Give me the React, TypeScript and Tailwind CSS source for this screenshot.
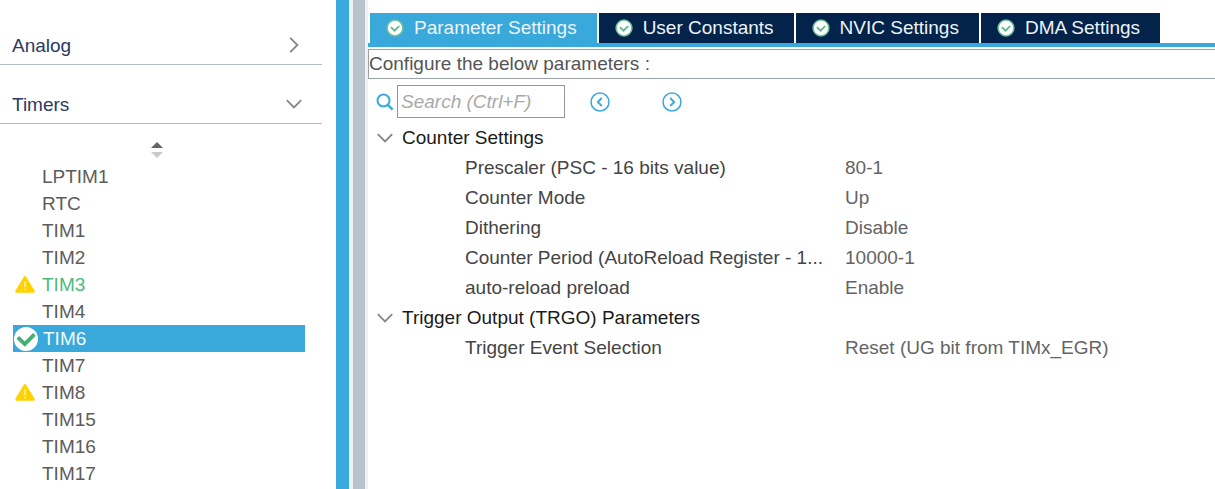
import { useState } from "react";
import clsx from "clsx";

type Status = "warning" | "ok";

interface Peripheral {
  name: string;
  status?: Status;
  configured?: boolean;
}

const PERIPHERALS: Peripheral[] = [
  { name: "LPTIM1" },
  { name: "RTC" },
  { name: "TIM1" },
  { name: "TIM2" },
  { name: "TIM3", status: "warning", configured: true },
  { name: "TIM4" },
  { name: "TIM6", status: "ok" },
  { name: "TIM7" },
  { name: "TIM8", status: "warning" },
  { name: "TIM15" },
  { name: "TIM16" },
  { name: "TIM17" },
];

const TABS = ["Parameter Settings", "User Constants", "NVIC Settings", "DMA Settings"];

const GROUPS = [
  {
    title: "Counter Settings",
    rows: [
      ["Prescaler (PSC - 16 bits value)", "80-1"],
      ["Counter Mode", "Up"],
      ["Dithering", "Disable"],
      ["Counter Period (AutoReload Register - 1...", "10000-1"],
      ["auto-reload preload", "Enable"],
    ],
  },
  {
    title: "Trigger Output (TRGO) Parameters",
    rows: [["Trigger Event Selection", "Reset (UG bit from TIMx_EGR)"]],
  },
];

function Chevron({ open }: { open: boolean }) {
  return (
    <svg className={clsx("w-4 h-4 shrink-0", !open && "-rotate-90")} viewBox="0 0 16 16" fill="none" stroke="#868686" strokeWidth="1.8" aria-hidden>
      <path d="M0.8 4.2 8 11.4l7.2-7.2" />
    </svg>
  );
}

function TabCheck() {
  return (
    <svg className="w-[18px] h-[18px] shrink-0" viewBox="0 0 18 18" fill="none" aria-hidden>
      <circle cx="9" cy="9" r="7.9" fill="#fff" stroke="#6cc296" strokeWidth="1.5" />
      <path d="m4.9 8.2 3.6 3.5 4.7-4.7" stroke="#56b988" strokeWidth="1.7" />
    </svg>
  );
}

function StatusIcon({ status }: { status?: Status }) {
  if (status === "warning") {
    return (
      <svg className="w-5 h-[17px]" viewBox="0 0 20 17" aria-hidden>
        <path d="M10 1.7 18.2 15.3H1.8Z" fill="#ffd200" stroke="#ffd200" strokeWidth="3" strokeLinejoin="round" />
        <path d="M10 5.5v5.6M10 12.8v1.7" stroke="#fff6c8" strokeWidth="1.5" />
      </svg>
    );
  }
  if (status === "ok") {
    return (
      <svg className="w-6 h-6" viewBox="0 0 24 24" fill="none" aria-hidden>
        <circle cx="12" cy="12" r="12" fill="#fff" />
        <path d="m3.8 10.3 7 6.8 9.6-9.8" stroke="#42b072" strokeWidth="3.8" />
      </svg>
    );
  }
  return null;
}

function StepButton({ label, d }: { label: string; d: string }) {
  return (
    <button type="button" aria-label={label} className="shrink-0">
      <svg className="w-5 h-5" viewBox="0 0 20 20" fill="none" stroke="#39a9dc" strokeWidth="1.5" aria-hidden>
        <circle cx="10" cy="10" r="9" />
        <path d={d} strokeWidth="1.9" />
      </svg>
    </button>
  );
}

function Sidebar() {
  const [selected, setSelected] = useState("TIM6");
  return (
    <nav className="w-[336px] shrink-0 pt-[6px] text-[19px]">
      {["Analog", "Timers"].map((category) => (
        <button
          key={category}
          type="button"
          aria-expanded={category === "Timers"}
          className="flex items-end justify-between w-[322px] h-[59px] pl-3 pr-5 pb-[7px] border-b border-[#b2bdc3] text-[#2b3a66] leading-[22px]"
        >
          {category}
          <span className="pb-1">
            <Chevron open={category === "Timers"} />
          </span>
        </button>
      ))}
      <button type="button" aria-label="Sort" className="flex items-center justify-center w-[314px] h-[39px] pt-3">
        <svg className="w-3 h-4" viewBox="0 0 12 16" aria-hidden>
          <path d="M6 0l6 6H0Z" fill="#666" />
          <path d="M0 10h12l-6 6Z" fill="#c9c9c9" />
        </svg>
      </button>
      <ul className="pl-[13px] pr-[31px]">
        {PERIPHERALS.map((p) => (
          <li key={p.name}>
            <button
              type="button"
              onClick={() => setSelected(p.name)}
              className={clsx(
                "flex items-center gap-[5px] w-full h-[27px] leading-[27px] text-left",
                p.name === selected ? "pl-px bg-[#39a9dc] text-[#f2f9fd]" : p.configured ? "text-[#4dba80]" : "text-[#5c5c5c]",
              )}
            >
              <span className="grid place-items-center w-6 shrink-0">
                <StatusIcon status={p.status} />
              </span>
              {p.name}
            </button>
          </li>
        ))}
      </ul>
    </nav>
  );
}

export default function App() {
  const [activeTab, setActiveTab] = useState(TABS[0]);
  return (
    <div className="flex h-screen overflow-hidden bg-white font-['Liberation_Sans',Arial,sans-serif] text-[19px]">
      <Sidebar />

      {/* splitter between the category list and the configuration panel */}
      <div className="flex shrink-0 bg-[#eef1f4]">
        <div className="w-[13px] bg-[#39a9dc]" />
        <div className="w-3 ml-1 mr-[3px] bg-[#b8c4ca]" />
      </div>

      <main className="flex-1 min-w-0 pt-[13px]">
        <div role="tablist" className="flex gap-[2px] pl-[2px] border-b-4 border-[#39a9dc]">
          {TABS.map((tab) => (
            <button
              key={tab}
              type="button"
              role="tab"
              aria-selected={tab === activeTab}
              onClick={() => setActiveTab(tab)}
              className={clsx(
                "flex items-center gap-[10px] h-[30px] pl-4 pr-5 text-[#eef3f7] whitespace-nowrap",
                tab === activeTab ? "bg-[#39a9dc]" : "bg-[#03234b]",
              )}
            >
              <TabCheck />
              {tab}
            </button>
          ))}
        </div>

        <p className="h-[30px] mt-[2px] -mr-1 border border-[#9aa2a8] leading-[28px] text-[#555]">
          Configure the below parameters :
        </p>

        <div className="flex items-center h-[33px] mt-[6px] pl-2">
          <label htmlFor="search" aria-label="Search" className="mr-[3px]">
            <svg className="w-[18px] h-[18px]" viewBox="0 0 18 18" fill="none" stroke="#39a9dc" strokeWidth="2" aria-hidden>
              <circle cx="7.5" cy="7.5" r="6" />
              <path d="m11.8 11.8 4.8 4.8" strokeWidth="2.4" />
            </svg>
          </label>
          <input
            id="search"
            type="text"
            placeholder="Search (Ctrl+F)"
            className="w-[168px] h-full px-[3px] border border-[#8f979c] italic placeholder:text-[#a9a9a9] outline-none"
          />
          <div className="flex gap-[52px] ml-[25px]">
            <StepButton label="Previous" d="m11.8 6-4 4 4 4" />
            <StepButton label="Next" d="m8.2 6 4 4-4 4" />
          </div>
        </div>

        <table className="w-full mt-[5px] table-fixed text-left leading-[30px]">
          <colgroup>
            <col className="w-[477px]" />
            <col />
          </colgroup>
          {GROUPS.map((group) => (
            <tbody key={group.title}>
              <tr>
                <th colSpan={2} className="p-0 font-normal text-[#1a1a1a]">
                  <button type="button" aria-expanded className="flex items-center gap-[9px] pl-[9px] h-[30px]">
                    <Chevron open />
                    {group.title}
                  </button>
                </th>
              </tr>
              {group.rows.map(([name, value]) => (
                <tr key={name}>
                  <th scope="row" className="p-0 pl-[97px] font-normal text-[#444] whitespace-nowrap">
                    {name}
                  </th>
                  <td className="p-0 text-[#646464] whitespace-nowrap">{value}</td>
                </tr>
              ))}
            </tbody>
          ))}
        </table>
      </main>
    </div>
  );
}
